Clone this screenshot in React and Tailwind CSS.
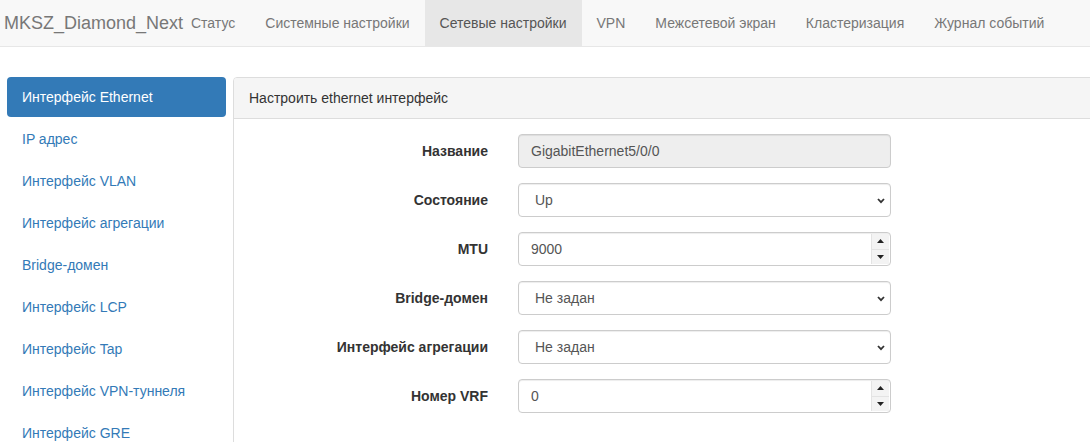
import React from "react";

const navItems = [
  "Статус",
  "Системные настройки",
  "Сетевые настройки",
  "VPN",
  "Межсетевой экран",
  "Кластеризация",
  "Журнал событий",
];

const sideItems = [
  "Интерфейс Ethernet",
  "IP адрес",
  "Интерфейс VLAN",
  "Интерфейс агрегации",
  "Bridge-домен",
  "Интерфейс LCP",
  "Интерфейс Tap",
  "Интерфейс VPN-туннеля",
  "Интерфейс GRE",
];

function Chevron() {
  return (
    <svg width="8" height="6" viewBox="0 0 8 6" className="absolute right-[5px] top-[14px]">
      <path d="M1 1 L4 4.2 L7 1" fill="none" stroke="#333" strokeWidth="1.8" />
    </svg>
  );
}

function Spinner() {
  return (
    <div className="absolute right-[1px] top-[1px] bottom-[1px] w-[18px] flex flex-col">
      <div className="flex-1 flex items-center justify-center bg-[#f3f3f3] border-l border-b border-[#e3e3e3]">
        <svg width="7" height="4" viewBox="0 0 7 4">
          <path d="M0 4 L3.5 0 L7 4 Z" fill="#222" />
        </svg>
      </div>
      <div className="flex-1 flex items-center justify-center bg-[#f3f3f3] border-l border-[#e3e3e3]">
        <svg width="7" height="4" viewBox="0 0 7 4">
          <path d="M0 0 L3.5 4 L7 0 Z" fill="#222" />
        </svg>
      </div>
    </div>
  );
}

function Field({ label, value, type }) {
  const base =
    "relative ml-[30px] w-[373px] h-[34px] border border-[#ccc] rounded-[4px] text-[14px] text-[#555] leading-[32px] shadow-[inset_0_1px_1px_rgba(0,0,0,0.075)]";
  let cls = base + " bg-white pl-[12px]";
  if (type === "disabled") cls = base + " bg-[#eee] pl-[12px]";
  if (type === "select") cls = base + " bg-white pl-[16px]";
  return (
    <div className="flex items-center h-[34px] mb-[15px]">
      <div className="w-[254px] text-right font-bold text-[14px] text-[#333] leading-[34px]">{label}</div>
      <div className={cls}>
        {value}
        {type === "select" && <Chevron />}
        {type === "number" && <Spinner />}
      </div>
    </div>
  );
}

export default function App() {
  return (
    <div
      className="h-[442px] w-[1090px] overflow-hidden bg-white"
      style={{ fontFamily: '"Liberation Sans", Arial, sans-serif' }}
    >
      <div className="flex h-[47px] bg-[#f8f8f8] border-b border-[#e7e7e7]">
        <div className="w-[176px] pl-[4px] text-[18px] text-[#777] leading-[46px] whitespace-nowrap">
          MKSZ_Diamond_Next
        </div>
        {navItems.map((n) => (
          <div
            key={n}
            className={
              "h-[46px] px-[15px] flex items-center text-[14px] whitespace-nowrap " +
              (n === "Сетевые настройки" ? "bg-[#e7e7e7] text-[#555]" : "text-[#777]")
            }
          >
            {n}
          </div>
        ))}
      </div>

      <div className="flex pt-[30px]">
        <div className="ml-[7px] w-[219px] shrink-0 flex flex-col">
          {sideItems.map((s, i) => (
            <div
              key={s}
              className={
                "h-[40px] px-[15px] leading-[40px] text-[14px] rounded-[4px] whitespace-nowrap " +
                (i > 0 ? "mt-[2px] " : "") +
                (i === 0 ? "bg-[#337ab7] text-white" : "text-[#337ab7]")
              }
            >
              {s}
            </div>
          ))}
        </div>

        <div className="ml-[7px] w-[1000px] shrink-0 border border-[#ddd] rounded-[4px] h-[600px]">
          <div className="h-[41px] bg-[#f5f5f5] border-b border-[#ddd] px-[15px] leading-[40px] text-[14px] text-[#333] rounded-t-[3px]">
            Настроить ethernet интерфейс
          </div>
          <div className="pt-[15px]">
            <Field label="Название" value="GigabitEthernet5/0/0" type="disabled" />
            <Field label="Состояние" value="Up" type="select" />
            <Field label="MTU" value="9000" type="number" />
            <Field label="Bridge-домен" value="Не задан" type="select" />
            <Field label="Интерфейс агрегации" value="Не задан" type="select" />
            <Field label="Номер VRF" value="0" type="number" />
          </div>
        </div>
      </div>
    </div>
  );
}
